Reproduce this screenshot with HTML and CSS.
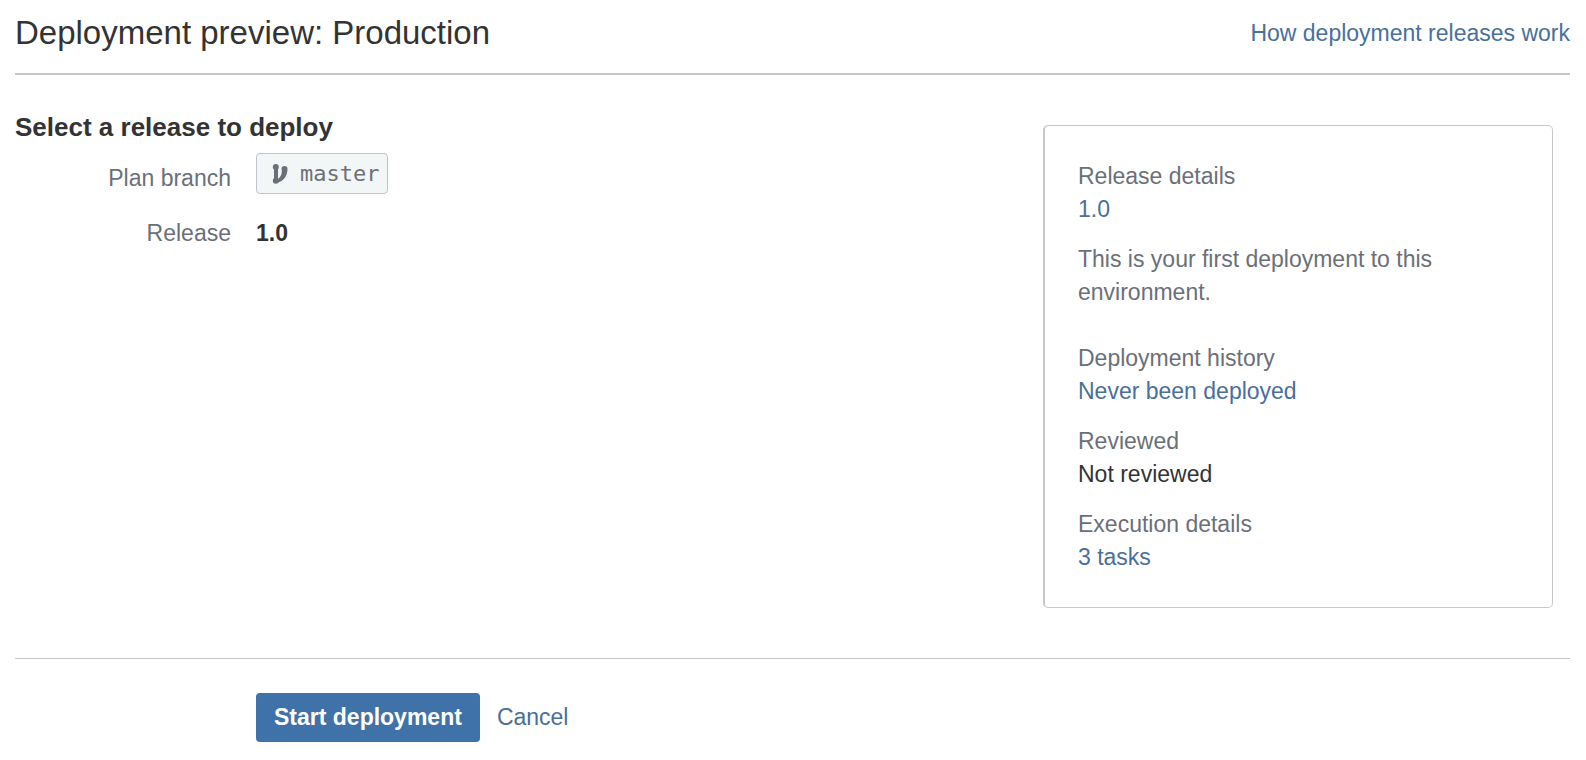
FILE: index.html
```html
<!DOCTYPE html>
<html lang="en">
<head>
<meta charset="utf-8">
<title>Deployment preview: Production</title>
<link rel="stylesheet" href="styles.css">
</head>
<body>
<header class="page-header">
  <h1 class="page-title">Deployment preview: Production</h1>
  <a class="link" href="#">How deployment releases work</a>
</header>
<main>
  <form class="deploy-form">
    <div class="content">
      <section class="release">
        <h2 class="section-title">Select a release to deploy</h2>
        <dl class="fields">
          <dt class="label">Plan branch</dt>
          <dd class="value">
            <span class="branch">
              <svg class="branch-icon" viewBox="0 0 16 20" aria-hidden="true">
                <path d="M2 3h4v14H2z" fill="currentColor"/>
                <path d="M9.500 4.500a3 2.500 0 0 1 6 0C15.500 12 12 17 5 19V15.500C9 13.500 10.500 9 9.500 4.500z" fill="currentColor"/>
                <circle cx="3.800" cy="3" r="3" fill="currentColor"/>
                <circle cx="3.800" cy="16.800" r="3" fill="currentColor"/>
              </svg>
              <span>master</span>
            </span>
          </dd>
          <dt class="label">Release</dt>
          <dd class="value strong">1.0</dd>
        </dl>
      </section>
      <aside class="details">
        <div class="group">
          <div>Release details</div>
          <a class="link" href="#">1.0</a>
        </div>
        <p class="note">This is your first deployment to this environment.</p>
        <div class="group">
          <div>Deployment history</div>
          <a class="link" href="#">Never been deployed</a>
        </div>
        <div class="group">
          <div>Reviewed</div>
          <div class="dark">Not reviewed</div>
        </div>
        <div class="group">
          <div>Execution details</div>
          <a class="link" href="#">3 tasks</a>
        </div>
      </aside>
    </div>
    <div class="actions">
      <button class="button" type="submit">Start deployment</button>
      <a class="link" href="#">Cancel</a>
    </div>
  </form>
</main>
</body>
</html>
```
FILE: styles.css
```css
* {
  box-sizing: border-box;
}

body {
  margin: 0;
  padding: 0 16px 0 15px;
  background: #fff;
  color: #333;
  font: 23px/33px "Liberation Sans", Arial, sans-serif;
}

.page-header {
  display: flex;
  align-items: center;
  justify-content: space-between;
  padding: 13px 0 20px;
  border-bottom: 2px solid #c6c6c6;
}

.page-title {
  margin: 0;
  font-size: 33px;
  line-height: 40px;
  font-weight: 400;
}

.link {
  color: #4a6f9c;
  text-decoration: none;
}

.content {
  display: flex;
  align-items: flex-start;
  justify-content: space-between;
  padding: 42px 17px 50px 0;
  border-bottom: 1px solid #c8c8c8;
}

.section-title {
  margin: 0;
  padding-bottom: 16px;
  font-size: 26px;
  line-height: 20px;
}

.fields {
  display: grid;
  grid-template-columns: 216px auto;
  column-gap: 25px;
  row-gap: 13px;
  margin: 0;
}

.label {
  padding-top: 9px;
  color: #6b7078;
  text-align: right;
}

.value {
  margin: 0;
}

.strong {
  padding-top: 9px;
  font-weight: 700;
}

.branch {
  display: flex;
  align-items: center;
  gap: 12px;
  padding: 3px 8px 3px 15px;
  border: 1px solid #bfc5ca;
  border-radius: 4px;
  background: #f3f6f7;
  color: #6b7078;
  font-family: "DejaVu Sans Mono", monospace;
  font-size: 22px;
}

.branch-icon {
  width: 16px;
  height: 20px;
}

.details {
  width: 510px;
  max-width: 50%;
  margin-top: 8px;
  padding: 34px 33px 33px;
  border: 1px solid #c8c8c8;
  border-left-width: 2px;
  border-radius: 5px;
  color: #6b7078;
}

.group + .group {
  margin-top: 17px;
}

.note {
  margin: 17px 0 33px;
}

.dark {
  color: #333;
}

.actions {
  display: flex;
  align-items: center;
  gap: 17px;
  padding: 34px 0 18px 241px;
}

.button {
  padding: 8px 18px;
  border: 0;
  border-radius: 4px;
  background: #3f72a9;
  color: #fff;
  font: inherit;
  font-weight: 700;
}
```
